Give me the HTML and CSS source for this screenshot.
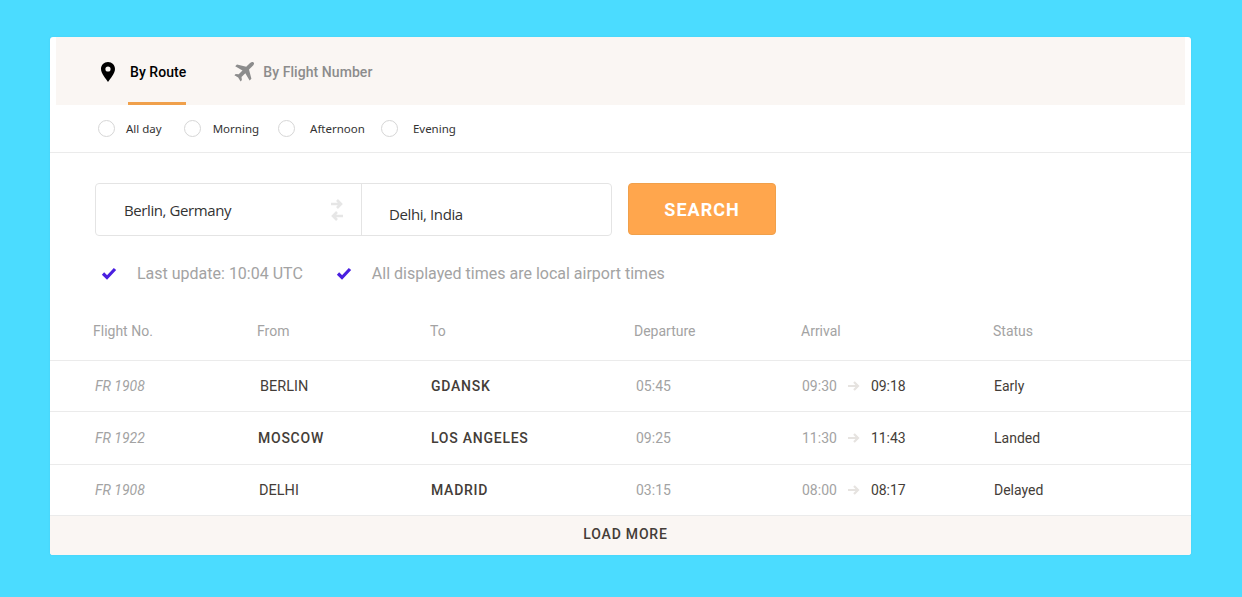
FILE: index.html
```html
<!DOCTYPE html>
<html lang="en">
<head>
  <meta charset="UTF-8">
  <meta name="viewport" content="width=device-width, initial-scale=1.0">
  <title>Flight status</title>
  <link rel="stylesheet" href="styles.css">
</head>
<body>
  <div class="card">
    <div class="tabs">
      <a class="tab active">
        <svg class="tab-icon pin" viewBox="0 0 14 20" width="14" height="20"><path fill="#000" fill-rule="evenodd" d="M7 0C3 0 0 3 0 6.900 0 11.500 5 16.500 7 20c2-3.500 7-8.500 7-13.100C14 3 11 0 7 0zm0 4.400a2.600 2.600 0 1 1 0 5.200 2.600 2.600 0 0 1 0-5.200z"/></svg>
        <span class="tab-label">By Route</span>
      </a>
      <a class="tab">
        <svg class="tab-icon plane" viewBox="0 0 20 20" width="20" height="20"><path fill="#8c8c8c" d="M19.600.4c-.9-.9-2.700-.3-3.800.8l-3.600 3.600L3 2.400 1.200 4.200l7.300 4.300-3.800 3.800-3-.4L.4 13.200l3.800 2.400 2.400 3.800 1.300-1.300-.4-3 3.800-3.800 4.300 7.300 1.800-1.800-2.400-9.200 3.600-3.600C19.900 3.100 20.500 1.300 19.600.4z"/></svg>
        <span class="tab-label">By Flight Number</span>
      </a>
    </div>

    <div class="times">
      <label class="time time-allday"><span class="radio"></span>All day</label>
      <label class="time time-morning"><span class="radio"></span>Morning</label>
      <label class="time time-afternoon"><span class="radio"></span>Afternoon</label>
      <label class="time time-evening"><span class="radio"></span>Evening</label>
    </div>

    <div class="search">
      <div class="route">
        <div class="route-from">
          <span>Berlin, Germany</span>
          <svg class="swap" viewBox="0 0 12 22" width="12" height="22"><path fill="none" stroke="#e6e6e6" stroke-width="2.600" d="M0 5h10M6 1l4 4-4 4M12 17H2M6 13l-4 4 4 4"/></svg>
        </div>
        <div class="route-to">Delhi, India</div>
      </div>
      <button class="search-btn">SEARCH</button>
    </div>

    <div class="notes">
      <div class="note note-update">
        <svg viewBox="0 0 16 13" width="16" height="13"><path fill="none" stroke="#4a1fe0" stroke-width="3.200" d="M2 6.500l4 4 8-8.500"/></svg>
        <span>Last update: 10:04 UTC</span>
      </div>
      <div class="note">
        <svg viewBox="0 0 16 13" width="16" height="13"><path fill="none" stroke="#4a1fe0" stroke-width="3.200" d="M2 6.500l4 4 8-8.500"/></svg>
        <span>All displayed times are local airport times</span>
      </div>
    </div>

    <div class="row head">
      <div>Flight No.</div>
      <div>From</div>
      <div>To</div>
      <div>Departure</div>
      <div>Arrival</div>
      <div>Status</div>
    </div>

    <div class="row flight row-a">
      <div class="num">FR 1908</div>
      <div class="city light from-berlin">BERLIN</div>
      <div class="city">GDANSK</div>
      <div class="dep">05:45</div>
      <div class="arr"><span class="sched">09:30</span><svg class="arrow" viewBox="0 0 12 10" width="12" height="10"><path fill="none" stroke="#e6e3e0" stroke-width="2.200" d="M0 5h10M6 1l4 4-4 4"/></svg><span class="actual">09:18</span></div>
      <div class="status">Early</div>
    </div>
    <div class="row flight row-b">
      <div class="num">FR 1922</div>
      <div class="city">MOSCOW</div>
      <div class="city">LOS ANGELES</div>
      <div class="dep">09:25</div>
      <div class="arr"><span class="sched">11:30</span><svg class="arrow" viewBox="0 0 12 10" width="12" height="10"><path fill="none" stroke="#e6e3e0" stroke-width="2.200" d="M0 5h10M6 1l4 4-4 4"/></svg><span class="actual">11:43</span></div>
      <div class="status">Landed</div>
    </div>
    <div class="row flight row-c">
      <div class="num">FR 1908</div>
      <div class="city light from-delhi">DELHI</div>
      <div class="city">MADRID</div>
      <div class="dep">03:15</div>
      <div class="arr"><span class="sched">08:00</span><svg class="arrow" viewBox="0 0 12 10" width="12" height="10"><path fill="none" stroke="#e6e3e0" stroke-width="2.200" d="M0 5h10M6 1l4 4-4 4"/></svg><span class="actual">08:17</span></div>
      <div class="status">Delayed</div>
    </div>

    <div class="load-more">LOAD MORE</div>
  </div>
</body>
</html>
```

FILE: styles.css
```css
* {
  box-sizing: border-box;
}
body {
  margin: 0;
  height: 597px;
  padding: 37px 51px 0 50px;
  background-color: #4bdcff;
  font-family: Roboto, sans-serif;
  overflow: hidden;
}
.card {
  height: 518px;
  background-color: #fff;
  border-radius: 3px;
  box-shadow: 0 0 2px rgba(0, 90, 140, 0.1);
  overflow: hidden;
}

/* tabs */
.tabs {
  display: flex;
  height: 68px;
  margin: 0 6px;
  padding-left: 45px;
  background-color: #faf6f3;
}
.tab {
  display: flex;
  height: 68px;
  margin-right: 48px;
  color: #8c8c8c;
  font-size: 14px;
  font-weight: 500;
  letter-spacing: 0.06px;
}
.tab.active {
  color: #000;
}
.tab-icon {
  margin-top: 25px;
  margin-right: 13px;
}
.tab-icon.plane {
  margin-top: 25px;
  margin-right: 9px;
}
.tab-label {
  height: 68px;
  padding-top: 27px;
  line-height: 17px;
}
.tab.active .tab-label {
  padding-left: 2px;
  border-bottom: 3px solid #f0a04b;
}

/* time of day */
.times {
  display: flex;
  align-items: center;
  height: 48px;
  padding-left: 48px;
  border-bottom: 1px solid #ebebeb;
  font-family: "Noto Sans", sans-serif;
  font-size: 11.500px;
  color: #333;
}
.time {
  display: flex;
  align-items: center;
}
.time-allday {
  margin-right: 22px;
}
.time-allday .radio {
  margin-right: 11px;
}
.time-morning {
  margin-right: 19px;
}
.time-afternoon {
  margin-right: 16px;
}
.time-afternoon .radio, .time-evening .radio {
  margin-right: 15px;
}
.radio {
  width: 17px;
  height: 17px;
  margin-right: 12px;
  border: 1px solid #d6d6d6;
  border-radius: 50%;
}

/* search */
.search {
  display: flex;
  margin-top: 30px;
  padding-left: 45px;
}
.route {
  display: flex;
  width: 517px;
  height: 53px;
  border: 1px solid #e4e4e4;
  border-radius: 4px;
  font-family: "Open Sans", sans-serif;
  font-size: 15px;
  letter-spacing: -0.4px;
  color: #333;
}
.route-from {
  display: flex;
  justify-content: space-between;
  align-items: center;
  width: 266px;
  padding: 0 18px 0 28px;
  border-right: 1px solid #e4e4e4;
}
.route-to {
  padding: 20px 0 0 27px;
  line-height: 20px;
}
.search-btn {
  width: 148px;
  height: 52px;
  margin-left: 16px;
  border: 1px solid #f0a04b;
  border-radius: 4px;
  background-color: #ffa64d;
  color: #fff;
  font-family: Roboto, sans-serif;
  font-size: 18px;
  font-weight: 700;
  letter-spacing: 1px;
}

.notes {
  display: flex;
  align-items: center;
  margin-top: 27px;
  padding-left: 51px;
  color: #a3a3a3;
  font-size: 16px;
  line-height: 22px;
}
.note {
  display: flex;
  align-items: center;
}
.note svg {
  margin-right: 20px;
  margin-bottom: 2px;
}
.note-update {
  margin-right: 33px;
}

/* table */
.row {
  display: grid;
  grid-template-columns: 164px 173px 204px 167px 192px 1fr;
  padding-left: 43px;
  border-bottom: 1px solid #ebebeb;
  align-items: center;
}
.head {
  height: 56px;
  margin-top: 20px;
  padding-bottom: 4px;
  color: #a3a3a3;
  font-size: 14px;
}
.flight {
  font-size: 14px;
  color: #a3a3a3;
}
.row-a {
  height: 51px;
}
.row-b {
  height: 53px;
}
.row-c {
  height: 51px;
}
.num {
  margin-left: 2px;
  font-style: italic;
}
.city {
  margin-left: 1px;
  color: #443d38;
  font-weight: 500;
  letter-spacing: 0.75px;
}
.city.light {
  font-size: 14.500px;
  font-weight: 400;
  letter-spacing: 0;
}
.from-berlin {
  margin-left: 3px;
}
.from-delhi {
  margin-left: 2px;
}
.dep {
  margin-left: 2px;
}
.arr {
  display: flex;
  align-items: center;
  margin-left: 1px;
}
.arrow {
  margin: 0 11px 0 11px;
}
.actual {
  color: #443d38;
}
.status {
  margin-left: 1px;
  color: #443d38;
}
.load-more {
  height: 39px;
  padding-left: 10px;
  background-color: #faf6f3;
  color: #443d38;
  font-size: 14px;
  font-weight: 500;
  letter-spacing: 0.8px;
  line-height: 36px;
  text-align: center;
}
```
